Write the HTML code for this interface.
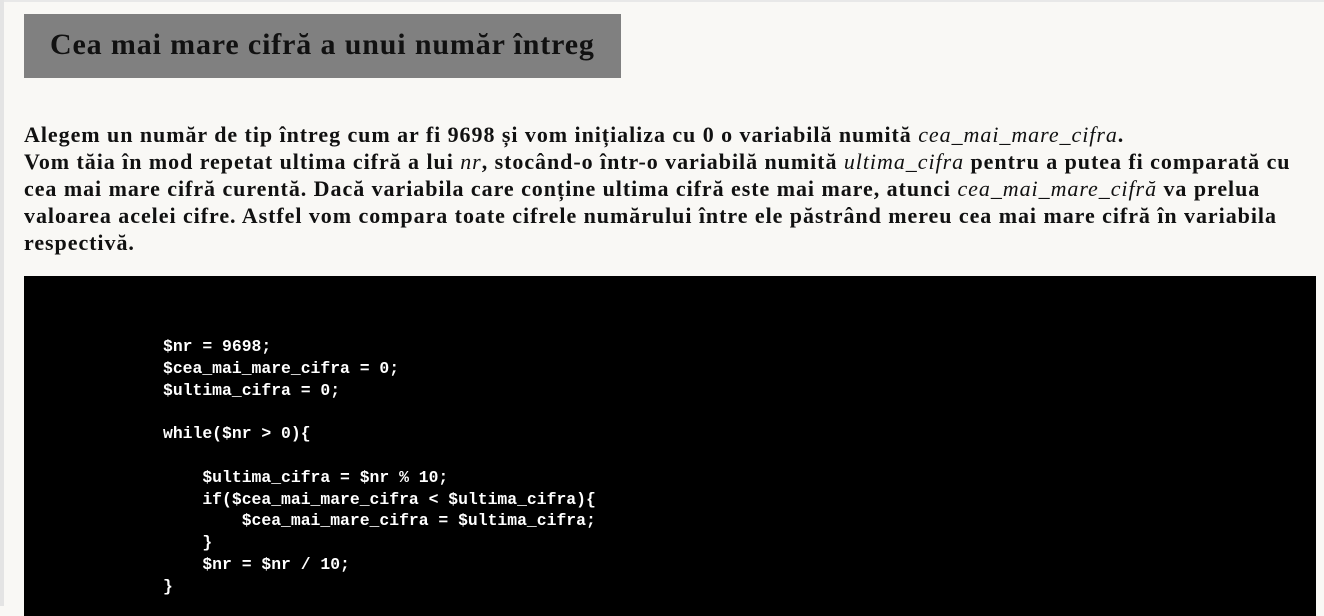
<!DOCTYPE html>
<html><head><meta charset="utf-8"><style>
html,body{margin:0;padding:0;}
body{width:1324px;height:606px;overflow:hidden;background:#f9f8f5;font-family:"Liberation Serif",serif;position:relative;}
.lb{position:absolute;left:0;top:0;width:4px;height:606px;background:#e4e4e4;}
.tb{position:absolute;left:0;top:0;width:1324px;height:2px;background:#e8e8e8;}
.h{position:absolute;left:24px;top:14px;width:597px;height:64px;background:#808080;}
.h h1{margin:0;position:absolute;left:26px;top:14px;font-size:30px;letter-spacing:0.85px;font-weight:bold;color:#111;white-space:nowrap;}
.p{position:absolute;left:24px;top:121px;width:1275px;font-size:22px;letter-spacing:0.95px;font-weight:bold;line-height:27px;color:#111;}
.p i{font-weight:normal;}
.c{position:absolute;left:24px;top:276px;width:1292px;height:340px;background:#000;}
.c pre{margin:0;position:absolute;left:139px;top:60px;font-family:"Liberation Mono",monospace;font-weight:bold;font-size:16.4px;line-height:21.8px;color:#fff;}
</style></head><body>
<div class="tb"></div><div class="lb"></div>
<div class="h"><h1>Cea mai mare cifră a unui număr întreg</h1></div>
<div class="p">Alegem un număr de tip întreg cum ar fi 9698 și vom inițializa cu 0 o variabilă numită <i>cea_mai_mare_cifra</i>.<br>Vom tăia în mod repetat ultima cifră a lui <i>nr</i>, stocând-o într-o variabilă numită <i>ultima_cifra</i> pentru a putea fi comparată cu cea mai mare cifră curentă. Dacă variabila care conține ultima cifră este mai mare, atunci <i>cea_mai_mare_cifră</i> va prelua valoarea acelei cifre. Astfel vom compara toate cifrele numărului între ele păstrând mereu cea mai mare cifră în variabila respectivă.</div>
<div class="c"><pre>$nr = 9698;
$cea_mai_mare_cifra = 0;
$ultima_cifra = 0;

while($nr &gt; 0){

    $ultima_cifra = $nr % 10;
    if($cea_mai_mare_cifra &lt; $ultima_cifra){
        $cea_mai_mare_cifra = $ultima_cifra;
    }
    $nr = $nr / 10;
}</pre></div>
</body></html>
